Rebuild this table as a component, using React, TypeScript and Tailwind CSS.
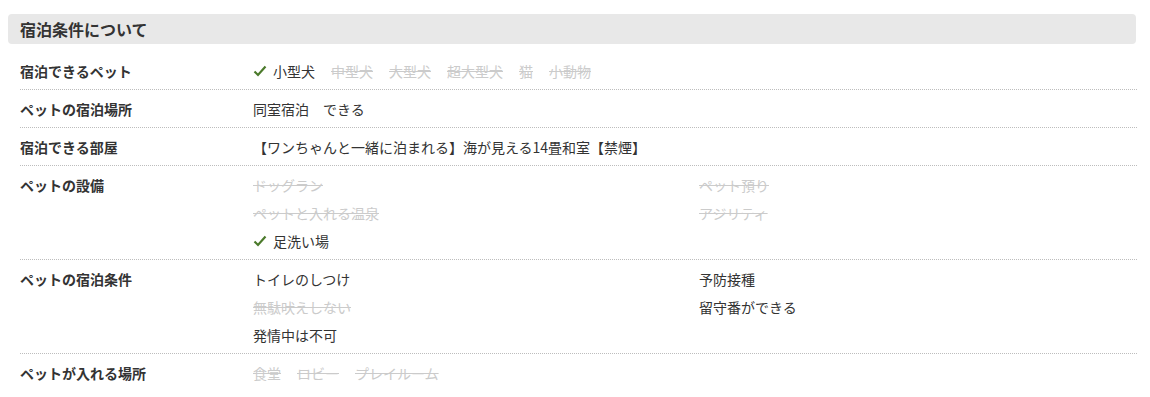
const font = "font-['Noto_Sans_CJK_JP','Noto_Sans',sans-serif]";

type Item = { label: string; ok?: boolean; check?: boolean };

function Check() {
  return (
    <svg width="14" height="12" viewBox="0 0 14 12" className="mr-[6px] shrink-0">
      <polyline points="1.5,6.5 5,10 12.5,1.5" fill="none" stroke="#4b7a2b" strokeWidth="2.2" />
    </svg>
  );
}

function Val({ item }: { item: Item }) {
  return (
    <span
      className={`flex items-center whitespace-nowrap ${
        item.ok ? "text-[#333]" : "text-[#cbcbcb] line-through"
      }`}
    >
      {item.check && <Check />}
      {item.label}
    </span>
  );
}

function Row({ label, children, last }: { label: string; children: React.ReactNode; last?: boolean }) {
  return (
    <div
      className={`flex pt-[10px] pb-[9px] leading-[18px] ${
        last ? "" : "border-b border-dotted border-[#bdbdbd]"
      }`}
    >
      <div className="w-[233px] shrink-0 font-bold text-[#333]">{label}</div>
      <div className="flex-1">{children}</div>
    </div>
  );
}

function Grid({ items }: { items: Item[] }) {
  return (
    <div className="grid grid-cols-[446px_1fr] gap-y-[10px]">
      {items.map((it) => (
        <Val key={it.label} item={it} />
      ))}
    </div>
  );
}

export default function App() {
  return (
    <div className={`${font} bg-white px-[8px] pt-[14px] text-[14px] text-[#333] w-[1150px] h-[397px]`}>
      <div className="w-[1128px] rounded-[4px] bg-[#e8e8e8] px-[12px] h-[30px] flex items-center text-[16px] font-bold text-[#333]">
        宿泊条件について
      </div>
      <div className="mt-[8px] ml-[12px] w-[1117px]">
        <Row label="宿泊できるペット">
          <div className="flex gap-[16px]">
            <Val item={{ label: "小型犬", ok: true, check: true }} />
            <Val item={{ label: "中型犬" }} />
            <Val item={{ label: "大型犬" }} />
            <Val item={{ label: "超大型犬" }} />
            <Val item={{ label: "猫" }} />
            <Val item={{ label: "小動物" }} />
          </div>
        </Row>
        <Row label="ペットの宿泊場所">
          <span>同室宿泊　できる</span>
        </Row>
        <Row label="宿泊できる部屋">
          <span>【ワンちゃんと一緒に泊まれる】海が見える14畳和室【禁煙】</span>
        </Row>
        <Row label="ペットの設備">
          <Grid
            items={[
              { label: "ドッグラン" },
              { label: "ペット預り" },
              { label: "ペットと入れる温泉" },
              { label: "アジリティ" },
              { label: "足洗い場", ok: true, check: true },
            ]}
          />
        </Row>
        <Row label="ペットの宿泊条件">
          <Grid
            items={[
              { label: "トイレのしつけ", ok: true },
              { label: "予防接種", ok: true },
              { label: "無駄吠えしない" },
              { label: "留守番ができる", ok: true },
              { label: "発情中は不可", ok: true },
            ]}
          />
        </Row>
        <Row label="ペットが入れる場所" last>
          <div className="flex gap-[16px]">
            <Val item={{ label: "食堂" }} />
            <Val item={{ label: "ロビー" }} />
            <Val item={{ label: "プレイルーム" }} />
          </div>
        </Row>
      </div>
    </div>
  );
}
